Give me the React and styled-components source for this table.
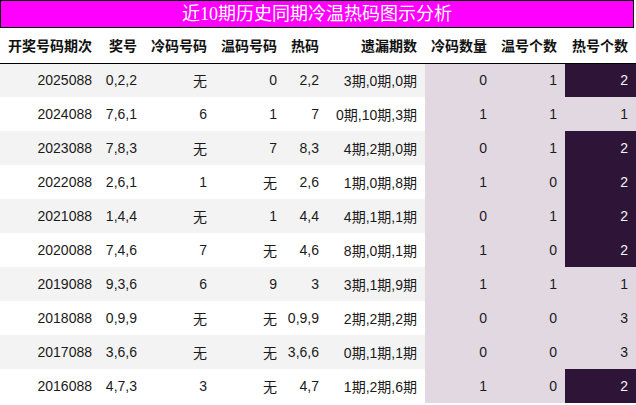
import React from "react";
import styled, { createGlobalStyle } from "styled-components";

const Global = createGlobalStyle`
  html, body { margin: 0; padding: 0; background: #ffffff; }
  body { font-family: "Liberation Sans", "Noto Sans CJK SC", sans-serif; }
`;

const Page = styled.div`
  width: 636px;
  overflow: hidden;
`;

const Title = styled.div`
  box-sizing: border-box;
  width: 634px;
  height: 28px;
  background: #ff00ff;
  border: 1px solid #000;
  color: #ffffff;
  font-family: "Liberation Serif", "Noto Sans CJK SC", serif;
  font-size: 18px;
  line-height: 26px;
  text-align: center;
  white-space: nowrap;
`;

const Table = styled.table`
  border-collapse: collapse;
  border-spacing: 0;
  table-layout: fixed;
  width: 636px;
  font-size: 14px;
  color: #1a1a1a;
`;

const Th = styled.th`
  box-sizing: border-box;
  height: 35px;
  padding: 0 8px 0 0;
  text-align: right;
  font-weight: 700;
  color: #111;
  background: #fff;
  border-bottom: 1px solid #000;
  white-space: nowrap;
  font-family: "Liberation Sans", "Noto Sans CJK SC", sans-serif;
`;

const Row = styled.tr`
  background: ${(p) => (p.$odd ? "#f3f3f3" : "#ffffff")};
`;

const Td = styled.td`
  box-sizing: border-box;
  height: 34px;
  padding: 0 8px 0 0;
  text-align: right;
  white-space: nowrap;
  background: ${(p) =>
    p.$tone === "dark" ? "#2e1537" : p.$tone === "light" ? "#e2d8e2" : "transparent"};
  color: ${(p) => (p.$tone === "dark" ? "#f4f4f4" : "#1a1a1a")};
`;

const widths = [100, 45, 70, 70, 42, 98, 70, 70, 71];
const headers = ["开奖号码期次", "奖号", "冷码号码", "温码号码", "热码", "遗漏期数", "冷码数量", "温号个数", "热号个数"];

const data = [
  ["2025088", "0,2,2", "无", "0", "2,2", "3期,0期,0期", 0, 1, 2],
  ["2024088", "7,6,1", "6", "1", "7", "0期,10期,3期", 1, 1, 1],
  ["2023088", "7,8,3", "无", "7", "8,3", "4期,2期,0期", 0, 1, 2],
  ["2022088", "2,6,1", "1", "无", "2,6", "1期,0期,8期", 1, 0, 2],
  ["2021088", "1,4,4", "无", "1", "4,4", "4期,1期,1期", 0, 1, 2],
  ["2020088", "7,4,6", "7", "无", "4,6", "8期,0期,1期", 1, 0, 2],
  ["2019088", "9,3,6", "6", "9", "3", "3期,1期,9期", 1, 1, 1],
  ["2018088", "0,9,9", "无", "无", "0,9,9", "2期,2期,2期", 0, 0, 3],
  ["2017088", "3,6,6", "无", "无", "3,6,6", "0期,1期,1期", 0, 0, 3],
  ["2016088", "4,7,3", "3", "无", "4,7", "1期,2期,6期", 1, 0, 2],
];

export default function App() {
  return (
    <Page>
      <Global />
      <Title>近10期历史同期冷温热码图示分析</Title>
      <Table>
        <colgroup>
          {widths.map((w, i) => (
            <col key={i} style={{ width: w }} />
          ))}
        </colgroup>
        <thead>
          <tr>
            {headers.map((h) => (
              <Th key={h}>{h}</Th>
            ))}
          </tr>
        </thead>
        <tbody>
          {data.map((r, i) => (
            <Row key={r[0]} $odd={i % 2 === 0}>
              {r.map((c, j) => {
                let tone;
                if (j === 6 || j === 7) tone = "light";
                if (j === 8) tone = c === 2 ? "dark" : "light";
                return (
                  <Td key={j} $tone={tone}>
                    {c}
                  </Td>
                );
              })}
            </Row>
          ))}
        </tbody>
      </Table>
    </Page>
  );
}
